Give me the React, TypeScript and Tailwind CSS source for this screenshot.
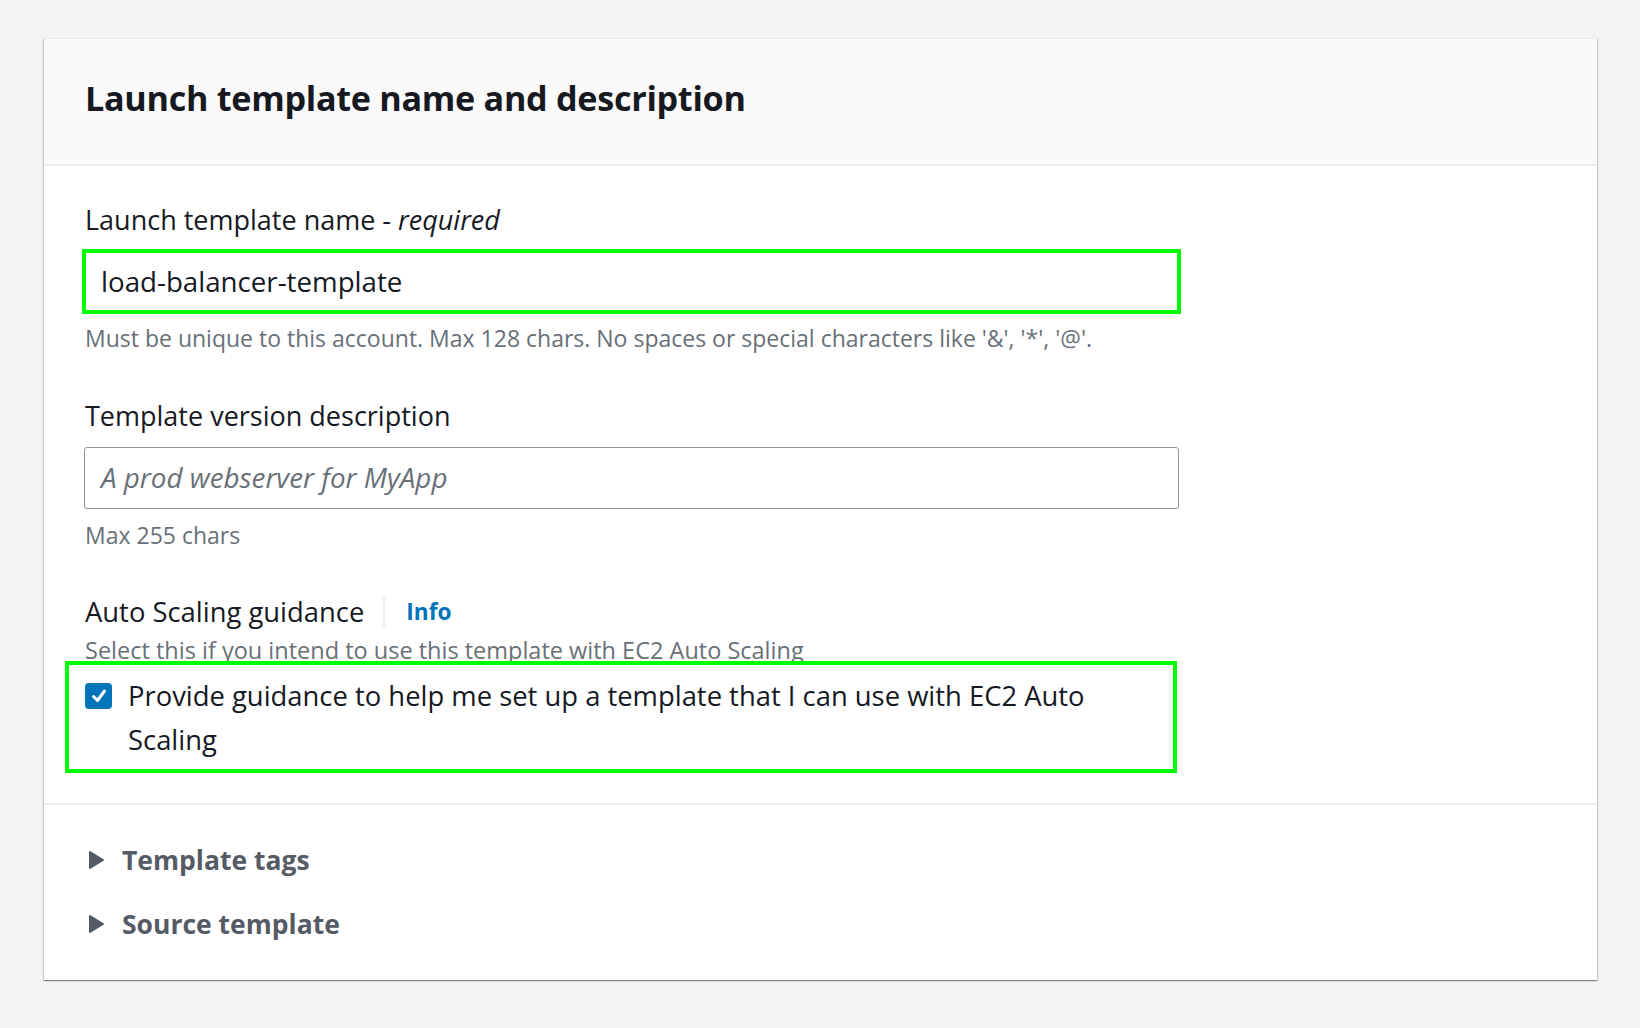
import React from "react";

const font = { fontFamily: '"Open Sans", "Noto Sans", Arial, sans-serif' };

function Triangle() {
  return (
    <svg width="17" height="20" viewBox="0 0 17 20" className="shrink-0">
      <path d="M2 2 L15 10 L2 18 Z" fill="#545b64" stroke="#545b64" strokeWidth="2" strokeLinejoin="round" />
    </svg>
  );
}

function Checkbox() {
  return (
    <div className="w-[27px] h-[26px] rounded-[4px] bg-[#0073bb] flex items-center justify-center shrink-0 mt-[9px]">
      <svg width="18" height="18" viewBox="0 0 18 18">
        <path d="M3.5 9.5 L7.5 13.5 L14.5 4" fill="none" stroke="#fff" strokeWidth="3" strokeLinecap="round" strokeLinejoin="round" />
      </svg>
    </div>
  );
}

export default function App() {
  return (
    <div className="min-h-screen w-full bg-[#f2f3f3] pt-[38px] pl-[44px] pr-[43px] pb-[48px]" style={font}>
      <div className="bg-white border-t border-[#eaeded] shadow-[0_1px_1px_0_rgba(0,28,36,0.3),1px_1px_1px_0_rgba(0,28,36,0.15),-1px_1px_1px_0_rgba(0,28,36,0.15)]">
        <div className="h-[127px] bg-[#fafafa] border-b-2 border-[#eaeded] flex items-center pl-[41px] pb-[8px]">
          <h2 className="text-[34.2px] font-bold text-[#16191f] tracking-[-0.3px] leading-[40px]">
            Launch template name and description
          </h2>
        </div>
        <div className="pl-[41px] pt-[38px] pb-[30px] text-[#16191f]">
          <div className="text-[27px] leading-[32px]">
            Launch template name - <i>required</i>
          </div>
          <div className="mt-[13px] -ml-[3px] w-[1099px] h-[65px] border-4 border-[#00ff00] flex items-center pl-[15px] text-[27.7px]">
            load-balancer-template
          </div>
          <div className="mt-[10px] text-[23px] leading-[28px] text-[#687078]">
            Must be unique to this account. Max 128 chars. No spaces or special characters like '&amp;', '*', '@'.
          </div>
          <div className="mt-[48px] text-[27px] leading-[32px]">Template version description</div>
          <div className="mt-[15px] -ml-[1px] w-[1095px] h-[62px] border border-[#879596] rounded-[3px] flex items-center pl-[16px] text-[27.8px] italic text-[#687078]">
            A prod webserver for MyApp
          </div>
          <div className="mt-[12px] text-[23px] leading-[28px] text-[#687078]">Max 255 chars</div>
          <div className="mt-[47px] flex items-center h-[32px]">
            <span className="text-[27.4px] leading-[32px]">Auto Scaling guidance</span>
            <span className="ml-[19px] w-[2px] h-[30px] bg-[#eaeded]" />
            <span className="ml-[21px] text-[22.7px] font-bold text-[#0073bb]">Info</span>
          </div>
          <div className="mt-[8px] text-[23.5px] leading-[28px] text-[#687078]">
            Select this if you intend to use this template with EC2 Auto Scaling
          </div>
          <div className="relative z-10 -mt-[3px] -ml-[20px] w-[1112px] h-[112px] border-4 border-[#00ff00] flex items-start pl-[16px] pt-[9px]">
            <Checkbox />
            <div className="ml-[16px] text-[27.4px] leading-[44px] flex-1 pr-[20px]">
              Provide guidance to help me set up a template that I can use with EC2 Auto Scaling
            </div>
          </div>
        </div>
        <div className="h-[2px] bg-[#eaeded]" />
        <div className="pl-[44px] pt-[37px] pb-[38px] text-[#545b64]">
          <div className="flex items-center h-[36px]">
            <Triangle />
            <span className="ml-[17px] text-[26.5px] font-bold leading-[36px]">Template tags</span>
          </div>
          <div className="mt-[28px] flex items-center h-[36px]">
            <Triangle />
            <span className="ml-[17px] text-[26.5px] font-bold leading-[36px]">Source template</span>
          </div>
        </div>
      </div>
    </div>
  );
}
